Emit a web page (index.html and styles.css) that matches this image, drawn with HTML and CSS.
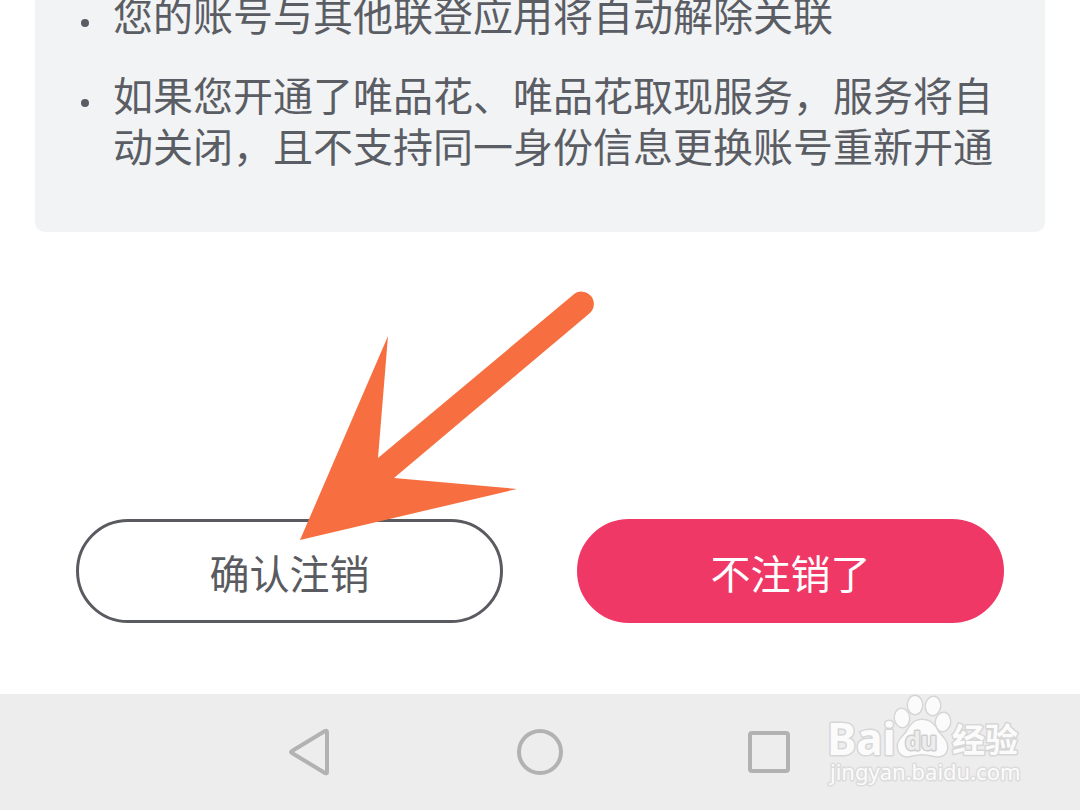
FILE: index.html
```html
<!DOCTYPE html>
<html lang="zh-CN">
<head>
    <meta charset="UTF-8">
    <meta name="viewport" content="width=device-width, initial-scale=1.0">
    <title>注销账号</title>
    <link rel="stylesheet" href="styles.css">
</head>
<body>

    <main class="content">
        <section class="notice">
            <ul class="notice-list">
                <li><span>您的账号与其他联登应用将自动解除关联</span></li>
                <li><span>如果您开通了唯品花、唯品花取现服务，服务将自动关闭，且不支持同一身份信息更换账号重新开通</span></li>
            </ul>
        </section>

        <div class="actions">
            <button class="button" type="button">确认注销</button>
            <button class="button primary" type="button">不注销了</button>
            <svg class="arrow" width="300" height="252" viewBox="298 290 300 252" aria-hidden="true">
                <path d="M300 540 L388 336 L378 458 L573 295 A12 12 0 0 1 590 313 L394 478 L517 489 Z"/>
            </svg>
        </div>
    </main>

    <nav class="navbar">
        <button class="nav-button" type="button" aria-label="返回">
            <svg width="48" height="48" viewBox="0 0 48 48"><path d="M5 23 L38 3 Q40 2 40 4 V44 Q40 46 38 45 L5 25 Q3 24 5 23 Z"/></svg>
        </button>
        <button class="nav-button" type="button" aria-label="主页">
            <svg width="48" height="48" viewBox="0 0 48 48"><circle cx="24" cy="24" r="21"/></svg>
        </button>
        <button class="nav-button" type="button" aria-label="最近任务">
            <svg width="48" height="48" viewBox="0 0 48 48"><rect x="5" y="5" width="38" height="38" rx="2"/></svg>
        </button>

        <svg class="watermark" width="200" height="100" viewBox="825 690 200 100">
            <g class="wm-shape">
                <ellipse cx="902" cy="718" rx="7" ry="9" transform="rotate(-8 902 718)"/>
                <ellipse cx="915" cy="705" rx="7" ry="9"/>
                <ellipse cx="933" cy="706" rx="7" ry="9" transform="rotate(8 933 706)"/>
                <ellipse cx="943" cy="722" rx="7" ry="9" transform="rotate(8 943 722)"/>
                <path d="M922 720 C929 720 934 724 937 730 C940 736 947 739 947 747 C947 754 942 757 936 756 C930 755 926 754 922 754 C917 754 914 755 909 756 C903 757 898 753 898 746 C898 739 905 736 908 730 C911 724 915 720 922 720 Z"/>
            </g>
            <text class="wm-brand" x="827" y="755">Bai</text>
            <text class="wm-du" x="905" y="750">du</text>
            <text class="wm-cn" x="952" y="752">经验</text>
            <text class="wm-url" x="830" y="780">jingyan.baidu.com</text>
        </svg>
    </nav>

</body>
</html>
```
FILE: styles.css
```css
* {
    box-sizing: border-box;
}
body {
    margin: 0;
    min-height: 100vh;
    display: flex;
    flex-direction: column;
    font-family: "Noto Sans CJK SC", sans-serif;
    font-size: 40px;
    line-height: 51px;
    color: #5a5d63;
    background: #fff;
}
.content {
    flex: 1;
    display: flex;
    flex-direction: column;
    justify-content: space-between;
    padding: 0 35px 71px;
    overflow: hidden;
}
.notice {
    padding: 0 40px 61px 46px;
    background: #f2f3f5;
    border-radius: 0 0 10px 10px;
}
/* the list is scrolled a little past the top edge */
.notice-list {
    margin: -11px 0 0;
    padding: 0;
    list-style: none;
    display: grid;
    gap: 29px;
}
.notice-list li {
    display: flex;
    gap: 24px;
}
.notice-list li::before {
    content: "";
    flex: none;
    width: 8px;
    height: 8px;
    margin-top: 30px;
    border-radius: 50%;
    background: #5a5d63;
}
.actions {
    position: relative;
    display: grid;
    grid-template-columns: 1fr 1fr;
    gap: 74px;
    padding: 0 41px;
}
.button {
    height: 104px;
    padding: 2px 20px 0;
    border: 3px solid #5a5b60;
    border-radius: 52px;
    background: #fff;
    color: #5a5b60;
    font: inherit;
    cursor: pointer;
}
.button.primary {
    border-color: #f03867;
    background: #f03867;
    color: #fff;
}
.arrow {
    position: absolute;
    left: 263px;
    bottom: 81px;
    fill: #f76f40;
    pointer-events: none;
}
.navbar {
    position: relative;
    display: flex;
    justify-content: center;
    align-items: center;
    gap: 181px;
    height: 116px;
    background: #ededed;
}
.nav-button {
    display: flex;
    padding: 0;
    border: none;
    background: none;
    cursor: pointer;
}
.nav-button svg {
    fill: none;
    stroke: #b2b2b2;
    stroke-width: 4;
    stroke-linejoin: round;
}
.watermark {
    position: absolute;
    right: 55px;
    bottom: 20px;
    fill: #fbfbfb;
    stroke: #d6d6d6;
    stroke-width: 3;
    stroke-linejoin: round;
    paint-order: stroke;
}
.wm-brand {
    font: bold 44px "Noto Sans", sans-serif;
}
.wm-du {
    font: bold 25px "Noto Sans", sans-serif;
    fill: #ededed;
    stroke: #cfcfcf;
}
.wm-cn {
    font: bold 33px "Noto Sans CJK SC", sans-serif;
}
.wm-url {
    font: 22px "Noto Sans", sans-serif;
    stroke: #dcdcdc;
}
```
